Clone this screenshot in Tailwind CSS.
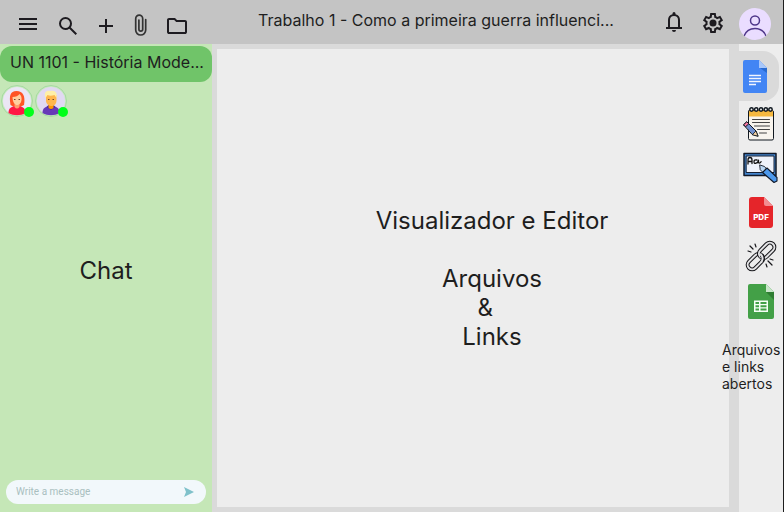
<!DOCTYPE html>
<html lang="pt-BR">
<head>
<meta charset="utf-8">
<meta name="viewport" content="width=device-width, initial-scale=1">
<title>Trabalho 1</title>
<script src="https://cdn.jsdelivr.net/npm/@tailwindcss/browser@4"></script>
</head>
<body class="flex h-screen flex-col border-r border-[#1e1e1e] bg-[#dadada] font-['Inter',sans-serif] text-[#1e1e1e]">
<header class="flex h-11 shrink-0 items-center bg-[#c4c4c4] pr-3 pl-4">
  <nav class="flex shrink-0 items-center pt-2" aria-label="Ferramentas">
    <button class="mb-1 mr-4" aria-label="Menu"><svg class="size-6" viewBox="0 0 24 24" fill="#1d1b20"><path d="M3 18v-2h18v2zm0-5v-2h18v2zm0-5V6h18v2z"/></svg></button>
    <button class="mr-3.5" aria-label="Pesquisar"><svg class="size-6" viewBox="0 0 24 24" fill="#1d1b20"><path d="m19.6 21-6.3-6.3A6.1 6.1 0 0 1 9.500 16 6.500 6.500 0 1 1 16 9.500a6.100 6.100 0 0 1-1.300 3.800l6.300 6.300zM9.500 14a4.500 4.500 0 1 0 0-9 4.500 4.500 0 0 0 0 9"/></svg></button>
    <button class="mr-2.5" aria-label="Adicionar"><svg class="size-6" viewBox="0 0 24 24" fill="#1d1b20"><path d="M11 19v-6H5v-2h6V5h2v6h6v2h-6v6z"/></svg></button>
    <button class="mr-[13px]" aria-label="Anexar"><svg class="size-6" viewBox="0 0 24 24" fill="none" stroke="#333" stroke-width="1.700" stroke-linecap="round"><path d="M17.700 5.500v10.500a5 5 0 0 1-10 0V4.700a3.500 3.500 0 0 1 7 0v10.500a1.900 1.900 0 0 1-3.800 0V6"/></svg></button>
    <button aria-label="Abrir pasta"><svg class="size-6" viewBox="0 0 24 24" fill="#1d1b20"><path d="M4 20q-.8 0-1.400-.6T2 18V6q0-.8.6-1.400T4 4h6l2 2h8q.8 0 1.400.6T22 8v10q0 .8-.6 1.400T20 20zm0-2h16V8h-8.800l-2-2H4z"/></svg></button>
  </nav>
  <h1 class="min-w-0 flex-1 truncate pb-1 pl-5 text-center text-base leading-5">Trabalho 1 - Como a primeira guerra influenci...</h1>
  <div class="flex shrink-0 items-center gap-3.5 pt-1">
    <button class="pb-1" aria-label="Notificações"><svg class="size-6" viewBox="0 0 24 24" fill="#1d1b20"><path d="M3 19v-2h2v-7a6 6 0 0 1 4.500-5.800v-.7a1.500 1.500 0 0 1 3 0v.7A6 6 0 0 1 17 10v7h2v2zm8 3a2 2 0 0 1-2-2h4a2 2 0 0 1-2 2m-4-5h8v-7a4 4 0 0 0-8 0z"/></svg></button>
    <button class="pb-0.5" aria-label="Configurações"><svg class="size-6" viewBox="0 0 24 24" fill="#1d1b20"><path fill-rule="evenodd" d="m9.250 22-.4-3.200q-.325-.125-.612-.3-.288-.175-.563-.375L4.700 19.375l-2.750-4.750 2.575-1.950Q4.500 12.500 4.500 12.338v-.675q0-.163.025-.338L1.950 9.375l2.750-4.750 2.975 1.250q.275-.2.575-.375.300-.175.600-.3l.4-3.200h5.500l.4 3.200q.325.125.613.300.287.175.562.375l2.975-1.250 2.750 4.750-2.575 1.950q.025.175.025.338v.675q0 .162-.05.337l2.575 1.950-2.750 4.750-2.950-1.250q-.275.200-.575.375-.300.175-.600.300l-.4 3.200zM11 20h1.975l.35-2.650q.775-.2 1.438-.588.662-.387 1.212-.937l2.475 1.025.975-1.700-2.150-1.625q.125-.350.175-.738.050-.387.050-.787t-.050-.788q-.050-.387-.175-.737l2.150-1.625-.975-1.700-2.475 1.050q-.550-.575-1.212-.963-.663-.387-1.438-.587L13 4h-1.975l-.350 2.650q-.775.200-1.437.587-.663.388-1.213.938L5.550 7.150l-.975 1.700 2.150 1.600q-.125.375-.175.750-.050.375-.050.800 0 .400.050.775t.175.750l-2.150 1.625.975 1.700 2.475-1.050q.550.575 1.213.963.662.387 1.437.587z"/><circle cx="12" cy="12" r="3.500"/></svg></button>
    <button class="size-8 overflow-hidden rounded-full bg-[#eaddff]" aria-label="Perfil"><svg class="size-8" viewBox="0 0 32 32" fill="none" stroke="#4f378a" stroke-width="1.500"><circle cx="16" cy="12.500" r="4.500"/><path d="M5 28c2-5 6-7.500 11-7.500S25 23 27 28"/></svg></button>
  </div>
</header>
<div class="flex min-h-0 flex-1">
  <aside class="flex w-53 shrink-0 flex-col bg-[#c5e7b7] pt-0.5">
    <h2 class="truncate rounded-xl bg-[#70c469] pt-1.5 pr-1 pb-2.5 pl-2.5 text-base leading-5">UN 1101 - História Mode...</h2>
    <ul class="flex gap-0.5 pt-[3px] pl-px">
      <li class="relative">
        <svg class="h-8 w-8" viewBox="0 0 32 32" role="img" aria-label="Participante ruiva"><circle cx="16" cy="16" r="15.500" fill="#c9e8c0" stroke="#a5daa0"/><circle cx="16" cy="16" r="14" fill="#ebe6f5"/><path d="M9.500 20c-1.500-9-.5-14 6-14s9 5 7.500 14l-4 2h-6z" fill="#ff5425"/><path d="M7.500 28c0-5 3-7 8.500-7s8.500 2 8.500 7c-5 3-12 3-17 0" fill="#ff1744"/><path d="M13.500 18h5v4q-2.500 3-5 0z" fill="#ff9e6d"/><path d="M11.500 12q5 0 7-3 2.500 2 2 6c-.5 4-3 5-4.500 5s-4.500-2-4.500-8" fill="#ffcf9f"/><path d="M13 14.500h1.500m3 0h1.500" stroke="#70452f"/></svg>
        <span class="absolute -right-px bottom-0 size-2.5 rounded-full bg-[#00ff19]"></span>
      </li>
      <li class="relative">
        <svg class="h-8 w-8" viewBox="0 0 32 32" role="img" aria-label="Participante loiro"><circle cx="16" cy="16" r="15.500" fill="#c9e8c0" stroke="#a5daa0"/><circle cx="16" cy="16" r="14" fill="#e1d9f2"/><path d="M7.500 28c0-5 3-7 8.500-7s8.500 2 8.500 7c-5 3-12 3-17 0" fill="#673ab7"/><path d="m11.500 22 4.500 3 4.500-3-2-2h-5z" fill="#4527a0"/><path d="M13.500 18h5v5q-2.500 2-5 0z" fill="#ff9800"/><path d="M11 10h10.500v6c-.5 4-3 5-5 5S11 19 11 16z" fill="#ffb74d"/><path d="M10.500 13c-2-6 1-8 5-7 5-1 7 2 6 7l-2-3c-3 1-5 1-7 0z" fill="#fff0a8"/><path d="M13 14.500h1.500m3 0h1.500" stroke="#70452f"/></svg>
        <span class="absolute -right-px bottom-0 size-2.5 rounded-full bg-[#00ff19]"></span>
      </li>
    </ul>
    <section class="flex flex-1 items-center justify-center pb-14 text-2xl leading-7">Chat</section>
    <form class="mx-1.5 mb-2 flex h-6 items-center rounded-full bg-[#f2f8fb] pr-3 pl-2.5">
      <input class="min-w-0 flex-1 bg-transparent font-['Roboto',sans-serif] text-[10px] leading-4 outline-none placeholder:text-[#a9bfc0]" type="text" aria-label="Mensagem" placeholder="Write a message">
      <button type="button" aria-label="Enviar"><svg class="size-2.5" viewBox="0 0 10 10"><path d="M0 0 10 5 0 10 2 5z" fill="#7fc1ca"/></svg></button>
    </form>
  </aside>
  <main class="flex min-w-0 flex-1 py-[5px] pr-2.5 pl-[5px]">
    <section class="flex flex-1 items-center justify-center bg-[#ededed] pl-[38px]">
      <p class="text-center text-2xl leading-[29px] whitespace-pre">Visualizador e Editor

Arquivos
&amp;&nbsp;&nbsp;
Links</p>
    </section>
  </main>
  <nav class="flex w-11 shrink-0 flex-col items-start bg-[#ededed] pt-[7px]" aria-label="Arquivos e links abertos">
    <button class="flex h-[50px] w-10 items-center rounded-r-2xl bg-[#dadada] pl-1" aria-label="Documento"><svg class="h-[33px] w-6" viewBox="0 0 24 33"><path d="M2 0h14l8 8v23a2 2 0 0 1-2 2H2a2 2 0 0 1-2-2V2a2 2 0 0 1 2-2" fill="#4285f4"/><path d="M16 0v8h8z" fill="#a8c7fa"/><path d="M17 8h7v5z" fill="#286ad0"/><path d="M6 15.500h12M6 18.500h12M6 21.500h12M6 24.500h7" stroke="#f1f5ff" stroke-width="1.400"/></svg></button>
    <button class="mt-[5px] ml-1" aria-label="Anotações"><svg class="h-[35px] w-8" viewBox="0 0 32 35" stroke-linejoin="round" stroke-linecap="round"><path d="M6 4.500h23q1.500 0 1.500 1.500v26.500q0 1.500-1.500 1.500H7q-1.500 0-1.500-1.500V6q0-1.500.5-1.500" fill="#f8f4ed" stroke="#101820"/><path d="M6 4.500h24v6H6z" fill="#f5b83f"/><g fill="#eee" stroke="#101820" stroke-width="1.500"><circle cx="8.500" cy="3.500" r="1.700"/><circle cx="13.200" cy="3.500" r="1.700"/><circle cx="18" cy="3.500" r="1.700"/><circle cx="22.800" cy="3.500" r="1.700"/><circle cx="27.500" cy="3.500" r="1.700"/></g><path d="M9.500 13.500h17m-17 3h17m-15 3.500h15m-12 3.500h12m-10 3.500h7" stroke="#444" stroke-width="1"/><path d="m.8 18.500 3-2.700 9.200 9.200 2 5-5.500-1.500z" fill="#7191cf" stroke="#101820"/><path d="m.8 18.500 3-2.700 2 2-3 2.700z" fill="#ff7ba6" stroke="#101820"/><path d="m9.500 28.500 3.500-3.500 2 5z" fill="#f1cfa0" stroke="#101820" stroke-width=".8"/></svg></button>
    <button class="mt-[11px] ml-1" aria-label="Quadro"><svg class="h-8 w-[35px]" viewBox="0 0 35 32" stroke-linejoin="round" stroke-linecap="round"><path d="M1 1.500h32v22H1z" fill="#4385cf" stroke="#111827" stroke-width="1.500"/><path d="M3.500 4h27.500v16.500H3.500z" fill="#eef2fb" stroke="#172033"/><path d="M5 12V8q0-2.500 2-2.500t2 2.500v3.500M5 9.500h4m5-1.500q-3-.5-3 1.700t2 1.500q2 0 2.500-3v2.500q1.500 1 2.500-1" fill="none" stroke="#111" stroke-width="1.300"/><path d="m17 13 4.500 1.500 2.500 3-3.500 3.500-3-3z" fill="#b9d7f5" stroke="#111827" stroke-width=".9"/><path d="m19.500 20.500 4.500-4.500 10 9.500v3.500l-3 1.500z" fill="#4d99ec" stroke="#111827" stroke-width="1.100"/></svg></button>
    <button class="mt-[13px] ml-2.5" aria-label="PDF"><svg class="h-[31px] w-6" viewBox="0 0 24 31"><path d="M3 0h12l9 9v19a3 3 0 0 1-3 3H3a3 3 0 0 1-3-3V3a3 3 0 0 1 3-3" fill="#e5252a"/><path d="M15 0v7q0 2 2 2h7z" fill="#f28c91"/><text x="12" y="23" text-anchor="middle" font-family="Inter, sans-serif" font-size="8" font-weight="800" fill="#fff">PDF</text></svg></button>
    <button class="mt-3 ml-1.5" aria-label="Link"><svg class="size-8" viewBox="0 0 32 32" fill="none" stroke-linecap="round"><g transform="rotate(-45 16 16)"><rect x="-1" y="11.500" width="18" height="9" rx="4.500" stroke="#17171b" stroke-width="4"/><rect x="-1" y="11.500" width="18" height="9" rx="4.500" stroke="#e3e3e5" stroke-width="2"/><rect x="15" y="11.500" width="18" height="9" rx="4.500" stroke="#17171b" stroke-width="4"/><rect x="15" y="11.500" width="18" height="9" rx="4.500" stroke="#e3e3e5" stroke-width="2"/><path d="M13 20.500q4-1 4-5" stroke="#17171b" stroke-width="4" stroke-linecap="butt"/><path d="M12 20.500q5-1 5-6" stroke="#e3e3e5" stroke-width="2"/></g><path d="m10 4 1 3M5 6l3 3m-5 2 3 1m15 12 1 3m1-6 4 4m-2-6 3 1" stroke="#17171b" stroke-width="1.200"/></svg></button>
    <button class="mt-3 ml-[9px]" aria-label="Planilha"><svg class="h-[35px] w-[26px]" viewBox="0 0 26 35"><path d="M2 0h16l8 8v25a2 2 0 0 1-2 2H2a2 2 0 0 1-2-2V2a2 2 0 0 1 2-2" fill="#43a047"/><path d="M18 0v8h8z" fill="#c8e6c9"/><path d="M18 8h8v8z" fill="#2e7d32"/><path d="M6 16.500h14v11.500H6z" fill="#f5fff5"/><path d="M7.500 18h3.500v2H7.500zm5 0h6v2h-6zm-5 3.300h3.500v2H7.500zm5 0h6v2h-6zm-5 3.200h3.500v2H7.500zm5 0h6v2h-6z" fill="#43a047"/></svg></button>
    <p class="relative -ml-[17px] mt-[22px] w-[60px] text-sm leading-[17px]">Arquivos e&nbsp;links abertos</p>
  </nav>
</div>
</body>
</html>
